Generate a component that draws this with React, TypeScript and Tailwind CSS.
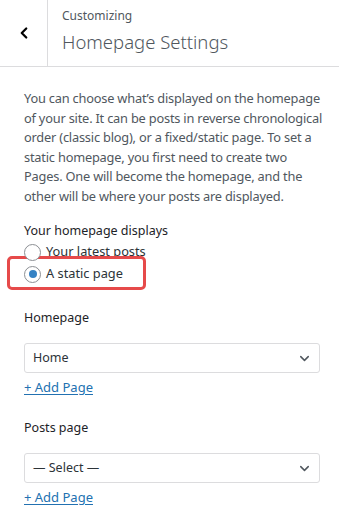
import { ChevronDown, ChevronLeft } from 'lucide-react';

function Radio({ checked, label }: { checked?: boolean; label: string }) {
  return (
    <label className="flex items-center h-[22px] text-[12.8px] text-[#2c3338]">
      <span className="relative z-10 w-[17px] h-[17px] rounded-full border border-[#8c8f94] bg-white flex items-center justify-center mr-[5px] shrink-0">
        {checked && <span className="w-[8px] h-[8px] rounded-full bg-[#3582c4]" />}
      </span>
      {label}
    </label>
  );
}

function PageSelect({ label, value }: { label: string; value: string }) {
  return (
    <div>
      <div className="text-[12.5px] text-[#1d2327] leading-5">{label}</div>
      <div className="mt-[15px] h-[30px] flex items-center justify-between border border-[#dcdcde] rounded-[3px] bg-white pl-[8px] pr-[7px] text-[12.5px] text-[#2c3338]">
        <span>{value}</span>
        <ChevronDown size={15} strokeWidth={2.4} className="text-[#50575e]" />
      </div>
      <a className="inline-block mt-[4px] text-[13px] leading-5 text-[#2271b1] underline underline-offset-2">
        + Add Page
      </a>
    </div>
  );
}

export default function App() {
  return (
    <div className="w-[339px] min-h-[531px] bg-white" style={{ fontFamily: '"Noto Sans", sans-serif' }}>
      <div className="h-[67px] flex border-b border-[#dcdcde]">
        <div className="w-[48px] border-r border-[#dcdcde] flex items-center justify-center">
          <ChevronLeft size={18} strokeWidth={3} className="text-black" />
        </div>
        <div className="pl-[14px] pt-[7px]">
          <div className="text-[12px] text-[#50575e] leading-[18px]">Customizing</div>
          <div className="text-[18.5px] font-light text-[#50575e] leading-[30px] mt-[2px]">Homepage Settings</div>
        </div>
      </div>

      <div className="pl-6 pr-[19px] pt-[22px]">
        <p className="text-[12.8px] leading-[19.5px] text-[#50575e] tracking-[-0.2px] whitespace-nowrap">
          You can choose what’s displayed on the homepage
          <br />
          of your site. It can be posts in reverse chronological
          <br />
          order (classic blog), or a fixed/static page. To set a
          <br />
          static homepage, you first need to create two
          <br />
          Pages. One will become the homepage, and the
          <br />
          other will be where your posts are displayed.
        </p>

        <div className="mt-[15px] text-[12.5px] text-[#1d2327] leading-5">Your homepage displays</div>
        <div className="relative">
          <Radio label="Your latest posts" />
          <Radio checked label="A static page" />
          <div className="absolute left-[-17px] top-[15px] w-[139px] h-[34px] border-[3px] border-[#e64a4a] rounded-[5px]" />
        </div>

        <div className="mt-[23px]">
          <PageSelect label="Homepage" value="Home" />
        </div>
        <div className="mt-[20px]">
          <PageSelect label="Posts page" value="— Select —" />
        </div>
      </div>
    </div>
  );
}
